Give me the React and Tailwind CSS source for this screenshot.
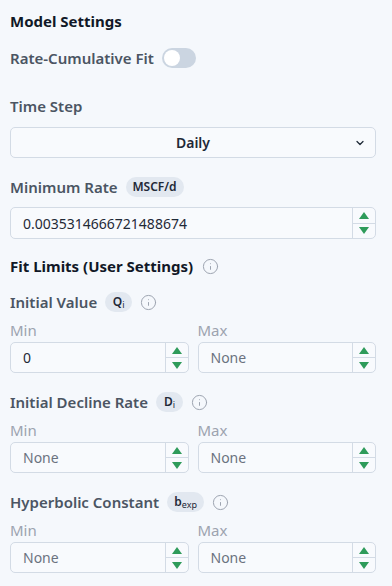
import React from 'react';
import { Info, ChevronDown } from 'lucide-react';

function Spinner() {
    return (
        <div className="flex flex-col w-[23px] border-l border-[#d3dbe5]">
            <div className="flex-1 flex items-center justify-center border-b border-[#d3dbe5]">
                <svg width="10" height="7" viewBox="0 0 10 7"><path d="M5 0L10 7H0Z" fill="#2e9b5a" /></svg>
            </div>
            <div className="flex-1 flex items-center justify-center">
                <svg width="10" height="7" viewBox="0 0 10 7"><path d="M0 0H10L5 7Z" fill="#2e9b5a" /></svg>
            </div>
        </div>
    );
}

function NumberInput({ value, placeholder, height = 'h-[31px]' }) {
    return (
        <div className={`flex ${height} border border-[#d3dbe5] rounded-[5px] bg-[#f8fafd] overflow-hidden`}>
            <div className="flex-1 flex items-center pl-[12px] text-[14px]">
                {value !== undefined
                    ? <span className="text-[#1f2937]">{value}</span>
                    : <span className="text-[#6b7280]">{placeholder}</span>}
            </div>
            <Spinner />
        </div>
    );
}

function Badge({ children, w }) {
    return (
        <span className={`inline-flex items-center justify-center h-5 ${w} rounded-full bg-[#e2e8f0] text-[12px] font-semibold text-[#1f2937]`}>
            {children}
        </span>
    );
}

function InfoIcon() {
    return <Info size={17} strokeWidth={1.4} className="text-[#9ca3af]" />;
}

function LimitGroup({ title, badge, badgeW, minValue, mt }) {
    return (
        <div className={mt}>
            <div className="flex items-center h-5 gap-[8px]">
                <span className="text-[15px] font-semibold text-[#4b5563]">{title}</span>
                <Badge w={badgeW}>{badge}</Badge>
                <span className="ml-[0px] flex"><InfoIcon /></span>
            </div>
            <div className="grid grid-cols-2 gap-[9px] mt-[8px]">
                <div>
                    <div className="h-5 leading-5 text-[15px] text-[#9ca3af]">Min</div>
                    <div className="mt-[2px]">
                        <NumberInput value={minValue} placeholder="None" />
                    </div>
                </div>
                <div>
                    <div className="h-5 leading-5 text-[15px] text-[#9ca3af]">Max</div>
                    <div className="mt-[2px]">
                        <NumberInput placeholder="None" />
                    </div>
                </div>
            </div>
        </div>
    );
}

export default function App() {
    return (
        <div className="w-[392px] h-[586px] bg-[#f5f8fc] pl-[10px] pr-[16px] pt-[11px] overflow-hidden" style={{ fontFamily: '"Noto Sans", "Open Sans", sans-serif' }}>
            <h3 className="h-5 leading-5 text-[15px] font-bold text-[#111827]">Model Settings</h3>

            <div className="flex items-center h-5 mt-[17px] gap-[8px]">
                <span className="text-[15px] font-semibold text-[#4b5563]">Rate-Cumulative Fit</span>
                <div className="w-[34px] h-[20px] rounded-full bg-[#cbd5e1] p-[2px] flex items-center">
                    <div className="w-[16px] h-[16px] rounded-full bg-white" />
                </div>
            </div>

            <div className="h-5 leading-5 mt-[28px] text-[15px] font-semibold text-[#4b5563]">Time Step</div>
            <div className="relative mt-[11px] h-[31px] border border-[#d3dbe5] rounded-[5px] bg-[#f8fafd] flex items-center justify-center">
                <span className="text-[14px] font-semibold text-[#1f2937]">Daily</span>
                <ChevronDown size={12} strokeWidth={2.5} className="absolute right-[9px] text-[#1f2937]" />
            </div>

            <div className="flex items-center h-5 mt-[19px] gap-[8px]">
                <span className="text-[15px] font-semibold text-[#4b5563]">Minimum Rate</span>
                <Badge w="w-[58px]">MSCF/d</Badge>
            </div>
            <div className="mt-[10px]">
                <NumberInput value="0.0035314666721488674" height="h-[32px]" />
            </div>

            <div className="flex items-center h-5 mt-[17px] gap-[9px]">
                <span className="text-[15px] font-bold text-[#111827]">Fit Limits (User Settings)</span>
                <InfoIcon />
            </div>

            <LimitGroup mt="mt-[16px]" title="Initial Value" badgeW="w-[27px]" minValue="0"
                badge={<span>Q<sub className="text-[9px] font-normal">i</sub></span>} />
            <LimitGroup mt="mt-[19px]" title="Initial Decline Rate" badgeW="w-[27px]"
                badge={<span>D<sub className="text-[9px] font-normal">i</sub></span>} />
            <LimitGroup mt="mt-[19px]" title="Hyperbolic Constant" badgeW="w-[37px]"
                badge={<span>b<sub className="text-[9px] font-normal">exp</sub></span>} />
        </div>
    );
}
